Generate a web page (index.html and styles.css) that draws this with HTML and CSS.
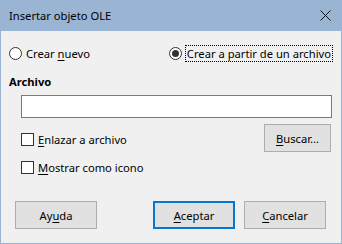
FILE: index.html
```html
<!DOCTYPE html>
<html>
<head>
<meta charset="utf-8">
<link rel="stylesheet" href="styles.css">
</head>
<body>
<div class="window">
  <div class="titlebar">
    <span class="title">Insertar objeto OLE</span>
    <svg class="close" width="11" height="11" viewBox="0 0 11 11"><path d="M0.5 0.5 L10.5 10.5 M10.5 0.5 L0.5 10.5" stroke="#111" stroke-width="1" fill="none"/></svg>
  </div>
  <div class="content">
    <div class="radio-row">
      <label class="opt opt-first"><span class="radio"></span><span>Crear <u>n</u>uevo</span></label>
      <label class="opt"><span class="radio checked"></span><span class="focus">Crear a partir de un archivo</span></label>
    </div>
    <div class="section">Archivo</div>
    <div class="field"></div>
    <div class="check-row">
      <label class="opt"><span class="check"></span><span><u>E</u>nlazar a archivo</span></label>
      <button class="btn btn-search"><u>B</u>uscar...</button>
    </div>
    <div class="check-row2">
      <label class="opt"><span class="check"></span><span><u>M</u>ostrar como icono</span></label>
    </div>
    <div class="buttons">
      <button class="btn">Ay<u>u</u>da</button>
      <span class="spacer"></span>
      <button class="btn btn-default"><u>A</u>ceptar</button>
      <button class="btn"><u>C</u>ancelar</button>
    </div>
  </div>
</div>
</body>
</html>
```
FILE: styles.css
```css
* { box-sizing: border-box; }
html, body { margin: 0; padding: 0; }
body {
  font-family: "Noto Sans", "Open Sans", sans-serif;
  font-size: 11.2px;
  color: #000;
  background: #fff;
}
.window {
  width: 342px;
  height: 244px;
  background: #f0f0f0;
  border: 1px solid #9ab5d3;
  border-top: none;
  display: flex;
  flex-direction: column;
}
.titlebar {
  height: 31px;
  background: #9ab5d3;
  margin: 0 -1px;
  padding: 0 11px 0 9px;
  display: flex;
  align-items: center;
  justify-content: space-between;
}
.title { font-size: 11.2px; }
.close { display: block; margin-top: 0; }
.content {
  flex: 1;
  display: flex;
  flex-direction: column;
  padding: 15px 9px 14px 8px;
}
.radio-row {
  display: flex;
  align-items: center;
  height: 15px;
}
.opt {
  display: flex;
  align-items: center;
  gap: 4px;
  white-space: nowrap;
}
.opt-first { width: 162px; }
.radio {
  width: 13px;
  height: 13px;
  border: 1px solid #333;
  border-radius: 50%;
  background: #fff;
  position: relative;
  flex: none;
}
.radio.checked::after {
  content: "";
  position: absolute;
  left: 2px;
  top: 2px;
  width: 7px;
  height: 7px;
  border-radius: 50%;
  background: #333;
}
.focus {
  outline: 1px dotted #000;
  outline-offset: 0;
  padding: 0 1px;
  line-height: 15px;
}
.section {
  font-weight: bold;
  margin-top: 13px;
  line-height: 16px;
}
.field {
  margin: 5px 0 0 12px;
  height: 23px;
  background: #fff;
  border: 1px solid #7a7a7a;
}
.check-row {
  display: flex;
  align-items: center;
  justify-content: space-between;
  margin: 6px 1px 0 12px;
  height: 28px;
}
.check-row .opt { margin-top: 3px; }
.check-row2 {
  margin: 9px 0 0 12px;
  height: 13px;
  display: flex;
  align-items: center;
}
.check {
  width: 13px;
  height: 13px;
  border: 1px solid #333;
  background: #fff;
  flex: none;
}
.btn {
  font: inherit;
  color: #000;
  background: #e1e1e1;
  border: 1px solid #adadad;
  height: 28px;
  width: 82px;
  padding: 0;
  margin: 0;
}
.btn-search { width: 67px; }
.btn-default { border: 2px solid #0078d7; margin-right: 9px; }
.buttons {
  margin-top: auto;
  display: flex;
  padding: 0 6px 0 6px;
}
.spacer { flex: 1; }
u { text-decoration: underline; text-underline-offset: 2px; }
```
